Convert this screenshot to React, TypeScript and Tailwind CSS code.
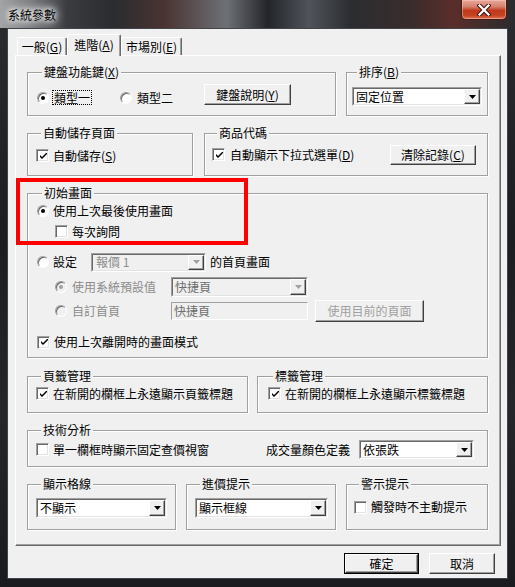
import React from "react";

type Kids = { children?: React.ReactNode; className?: string };

function Acc({ c }: { c: string }) {
  return (
    <>
      (<span className="underline underline-offset-[1px]">{c}</span>)
    </>
  );
}

function Radio({ checked = false, disabled = false }: { checked?: boolean; disabled?: boolean }) {
  return (
    <span
      className={`flex h-[12px] w-[12px] shrink-0 items-center justify-center rounded-full border border-t-[#a0a0a0] border-l-[#a0a0a0] border-r-white border-b-white shadow-[inset_1px_1px_0_#696969] ${
        disabled ? "bg-[#f0f0f0]" : "bg-white"
      }`}
    >
      {checked && <span className={`h-[4px] w-[4px] rounded-full ${disabled ? "bg-[#a0a0a0]" : "bg-black"}`} />}
    </span>
  );
}

function Check({ checked = false }: { checked?: boolean }) {
  return (
    <span className="flex h-[13px] w-[13px] shrink-0 items-center justify-center border border-t-[#a0a0a0] border-l-[#a0a0a0] border-r-white border-b-white bg-white shadow-[inset_1px_1px_0_#696969,inset_-1px_-1px_0_#e3e3e3]">
      {checked && (
        <svg width="7" height="7" viewBox="0 0 7 7" className="ml-[1px] mt-[1px]">
          <path d="M0 2 L2 4 L7 -1 L7 1 L2 6 L0 4 Z" fill="#000" />
        </svg>
      )}
    </span>
  );
}

function Btn({ children, className = "", disabled = false }: Kids & { disabled?: boolean }) {
  return (
    <div
      className={`flex shrink-0 items-center justify-center border border-t-white border-l-white border-r-[#404040] border-b-[#404040] bg-[#f0f0f0] shadow-[inset_-1px_-1px_0_#a0a0a0] ${
        disabled ? "text-[#a0a0a0]" : "text-black"
      } ${className}`}
    >
      {children}
    </div>
  );
}

function Arrow({ disabled = false }: { disabled?: boolean }) {
  return (
    <svg width="7" height="4" viewBox="0 0 7 4">
      <path d="M0 0 H7 L3.5 4 Z" fill={disabled ? "#a0a0a0" : "#000"} />
    </svg>
  );
}

function Select({
  value,
  className = "",
  disabled = false,
  textClass = "text-black",
}: {
  value: React.ReactNode;
  className?: string;
  disabled?: boolean;
  textClass?: string;
}) {
  return (
    <div
      className={`flex shrink-0 border border-t-[#a0a0a0] border-l-[#a0a0a0] border-r-white border-b-white ${className}`}
    >
      <div
        className={`flex flex-1 border border-t-[#696969] border-l-[#696969] border-r-[#e3e3e3] border-b-[#e3e3e3] ${
          disabled ? "bg-[#f0f0f0]" : "bg-white"
        }`}
      >
        <span className={`flex flex-1 items-center pl-[2px] whitespace-nowrap ${textClass}`}>{value}</span>
        <span className="flex w-[16px] items-center justify-center border border-t-white border-l-white border-r-[#404040] border-b-[#404040] bg-[#f0f0f0] shadow-[inset_-1px_-1px_0_#a0a0a0]">
          <Arrow disabled={disabled} />
        </span>
      </div>
    </div>
  );
}

function Group({ label, className = "", children }: { label: React.ReactNode; className?: string; children?: React.ReactNode }) {
  return (
    <fieldset
      className={`min-w-0 shrink-0 border border-[#a0a0a0] shadow-[inset_1px_1px_0_#ffffff,1px_1px_0_#ffffff] ${className}`}
    >
      <legend className="ml-[5px] bg-[#f0f0f0] px-[2px] text-[12px] leading-[16px] whitespace-nowrap">{label}</legend>
      {children}
    </fieldset>
  );
}

function Tab({ children, selected = false, className = "" }: Kids & { selected?: boolean }) {
  return (
    <div
      className={`flex shrink-0 items-center justify-center rounded-t-[2px] border border-b-0 border-t-white border-l-white border-r-[#696969] bg-[#f0f0f0] shadow-[inset_-1px_0_0_#a0a0a0] whitespace-nowrap ${
        selected ? "relative z-10 -mb-px h-[22px] pb-[1px]" : "h-[18px]"
      } ${className}`}
    >
      {children}
    </div>
  );
}

export default function App() {
  return (
    <div className="relative flex h-[587px] w-[515px] flex-col overflow-hidden bg-[linear-gradient(180deg,#2a2c30_0%,#1b1d21_40%,#24262a_70%,#1a1b1e_100%)] font-['Noto_Sans_CJK_TC','Noto_Sans_CJK_SC',sans-serif] text-[12px] leading-[16px] text-black">
      {/* title bar */}
      <div className="flex h-[28px] shrink-0 items-start justify-between bg-[linear-gradient(90deg,#a3a4a6_0%,#7b7d80_6%,#3a3c40_13%,#2a2c30_22%,#4a3432_32%,#6d7075_44%,#23252a_52%,#50545a_60%,#2b2d31_68%,#3a2c2c_80%,#5a2e2a_88%,#2a2b2e_100%)] pl-[8px] pr-[8px]">
        <span className="mt-[7px] text-[12px] leading-[16px] text-black [text-shadow:0_0_5px_#fff,0_0_8px_#fff,0_0_12px_#fff]">
          系統參數
        </span>
        <div className="flex h-[20px] w-[46px] items-center justify-center rounded-b-[5px] border border-t-0 border-[#4a1b14] bg-[linear-gradient(180deg,#e8a89c_0%,#d6806c_35%,#c23a1e_55%,#c4401f_80%,#dc7456_100%)] shadow-[inset_0_0_0_1px_rgba(255,210,200,0.45)]">
          <svg width="14" height="12" viewBox="0 0 14 12">
            <path d="M2.5 1.5 L11.5 10.5 M11.5 1.5 L2.5 10.5" stroke="#3b1711" strokeWidth="4.2" strokeLinecap="square" />
            <path d="M2.5 1.5 L11.5 10.5 M11.5 1.5 L2.5 10.5" stroke="#ffffff" strokeWidth="2.2" strokeLinecap="square" />
          </svg>
        </div>
      </div>

      {/* client area */}
      <div className="mx-[7px] flex h-[551px] shrink-0 flex-col border border-[#41454b] bg-[#f0f0f0] pl-[7px]">
        {/* tabs */}
        <div className="ml-[2px] mt-[5px] flex h-[21px] items-end">
          <Tab className="w-[50px]">
            一般<Acc c="G" />
          </Tab>
          <Tab selected className="w-[54px]">
            進階<Acc c="A" />
          </Tab>
          <Tab className="w-[61px]">
            市場別<Acc c="E" />
          </Tab>
        </div>

        {/* panel */}
        <div className="flex h-[491px] w-[486px] flex-col border border-t-white border-l-white border-r-[#696969] border-b-[#696969] pl-[11px] pr-[12px] pt-[8px] shadow-[inset_-1px_-1px_0_#a0a0a0]">
          {/* row 1 */}
          <div className="flex gap-[10px]">
            <Group label={<>鍵盤功能鍵<Acc c="X" /></>} className="h-[52px] w-[309px] pl-[9px]">
              <div className="mt-[4px] flex h-[21px] items-center">
                <div className="mt-[6px] flex w-[83px] items-center gap-[3px]">
                  <Radio checked />
                  <span className="border border-dotted border-black px-[1px] leading-[13px]">類型一</span>
                </div>
                <div className="mt-[6px] flex w-[84px] items-center gap-[5px]">
                  <Radio />
                  <span>類型二</span>
                </div>
                <Btn className="h-[21px] w-[87px]">
                  鍵盤說明<Acc c="Y" />
                </Btn>
              </div>
            </Group>
            <Group label={<>排序<Acc c="B" /></>} className="h-[52px] w-[142px] pl-[5px]">
              <Select value="固定位置" className="mt-[7px] h-[19px] w-[130px]" />
            </Group>
          </div>

          {/* row 2 */}
          <div className="mt-[9px] flex gap-[11px]">
            <Group label="自動儲存頁面" className="h-[51px] w-[166px] pl-[8px]">
              <div className="mt-[4px] flex h-[21px] items-center gap-[4px]">
                <Check checked />
                <span>
                  自動儲存<Acc c="S" />
                </span>
              </div>
            </Group>
            <Group label="商品代碼" className="h-[51px] w-[284px] pl-[7px] pr-[11px]">
              <div className="mt-[3px] flex h-[21px] items-center">
                <Check checked />
                <span className="ml-[5px]">
                  自動顯示下拉式選單<Acc c="D" />
                </span>
                <Btn className="ml-auto h-[20px] w-[86px]">
                  清除記錄<Acc c="C" />
                </Btn>
              </div>
            </Group>
          </div>

          {/* row 3 */}
          <Group label="初始畫面" className="mt-[9px] h-[173px] w-full pl-[9px]">
            <div className="flex h-[20px] items-center gap-[4px]">
              <Radio checked />
              <span>使用上次最後使用畫面</span>
            </div>
            <div className="ml-[18px] flex h-[21px] items-center gap-[4px]">
              <Check />
              <span>每次詢問</span>
            </div>
            <div className="mt-[10px] flex h-[20px] items-center">
              <Radio />
              <span className="ml-[4px] w-[38px]">設定</span>
              <Select value="報價 1" disabled textClass="text-[#8c8c8c] pl-[3px]" className="h-[19px] w-[115px]" />
              <span className="ml-[4px]">的首頁畫面</span>
            </div>
            <div className="ml-[18px] mt-[5px] flex h-[20px] items-center">
              <Radio checked disabled />
              <span className="ml-[5px] w-[99px] text-[#8c8c8c]">使用系統預設值</span>
              <Select value="快捷頁" disabled textClass="text-[#6d6d6d]" className="h-[20px] w-[137px]" />
            </div>
            <div className="ml-[18px] mt-[3px] flex h-[22px] items-center">
              <Radio disabled />
              <span className="ml-[5px] w-[99px] text-[#8c8c8c]">自訂首頁</span>
              <div className="flex h-[18px] w-[137px] items-center border border-t-[#a0a0a0] border-l-[#a0a0a0] border-r-white border-b-white bg-[#f0f0f0] pl-[2px] text-[#6d6d6d]">
                快捷頁
              </div>
              <Btn disabled className="ml-[7px] h-[22px] w-[109px]">
                使用目前的頁面
              </Btn>
            </div>
            <div className="mt-[10px] flex h-[20px] items-center gap-[4px]">
              <Check checked />
              <span>使用上次離開時的畫面模式</span>
            </div>
          </Group>

          {/* row 4 */}
          <div className="mt-[10px] flex gap-[9px]">
            <Group label="頁籤管理" className="h-[45px] w-[221px] pl-[8px]">
              <div className="flex h-[19px] items-center gap-[4px]">
                <Check checked />
                <span>在新開的欄框上永遠顯示頁籤標題</span>
              </div>
            </Group>
            <Group label="標籤管理" className="h-[45px] w-[231px] pl-[10px]">
              <div className="flex h-[19px] items-center gap-[4px]">
                <Check checked />
                <span>在新開的欄框上永遠顯示標籤標題</span>
              </div>
            </Group>
          </div>

          {/* row 5 */}
          <Group label="技術分析" className="mt-[9px] h-[45px] w-full pl-[8px] pr-[13px]">
            <div className="mt-[2px] flex h-[19px] items-center">
              <Check />
              <span className="ml-[4px]">單一欄框時顯示固定查價視窗</span>
              <span className="ml-auto">成交量顏色定義</span>
              <Select value="依張跌" className="ml-[9px] h-[19px] w-[115px]" />
            </div>
          </Group>

          {/* row 6 */}
          <div className="mt-[9px] flex gap-[10px]">
            <Group label="顯示格線" className="h-[54px] w-[149px] pl-[8px]">
              <Select value="不顯示" className="mt-[6px] h-[20px] w-[131px]" />
            </Group>
            <Group label="進價提示" className="h-[54px] w-[150px] pl-[8px]">
              <Select value="顯示框線" className="mt-[6px] h-[20px] w-[133px]" />
            </Group>
            <Group label="警示提示" className="h-[54px] w-[142px] pl-[7px]">
              <div className="mt-[5px] flex h-[20px] items-center gap-[4px]">
                <Check />
                <span>觸發時不主動提示</span>
              </div>
            </Group>
          </div>
        </div>

        {/* buttons */}
        <div className="mt-[7px] flex justify-end gap-[10px] pr-[12px]">
          <div className="flex h-[21px] w-[75px] border border-black">
            <Btn className="h-full w-full">確定</Btn>
          </div>
          <Btn className="h-[21px] w-[66px]">取消</Btn>
        </div>
      </div>

      {/* annotation */}
      <div className="absolute left-[16px] top-[178px] h-[67px] w-[232px] border-[4px] border-[#ff0000]" />
    </div>
  );
}
